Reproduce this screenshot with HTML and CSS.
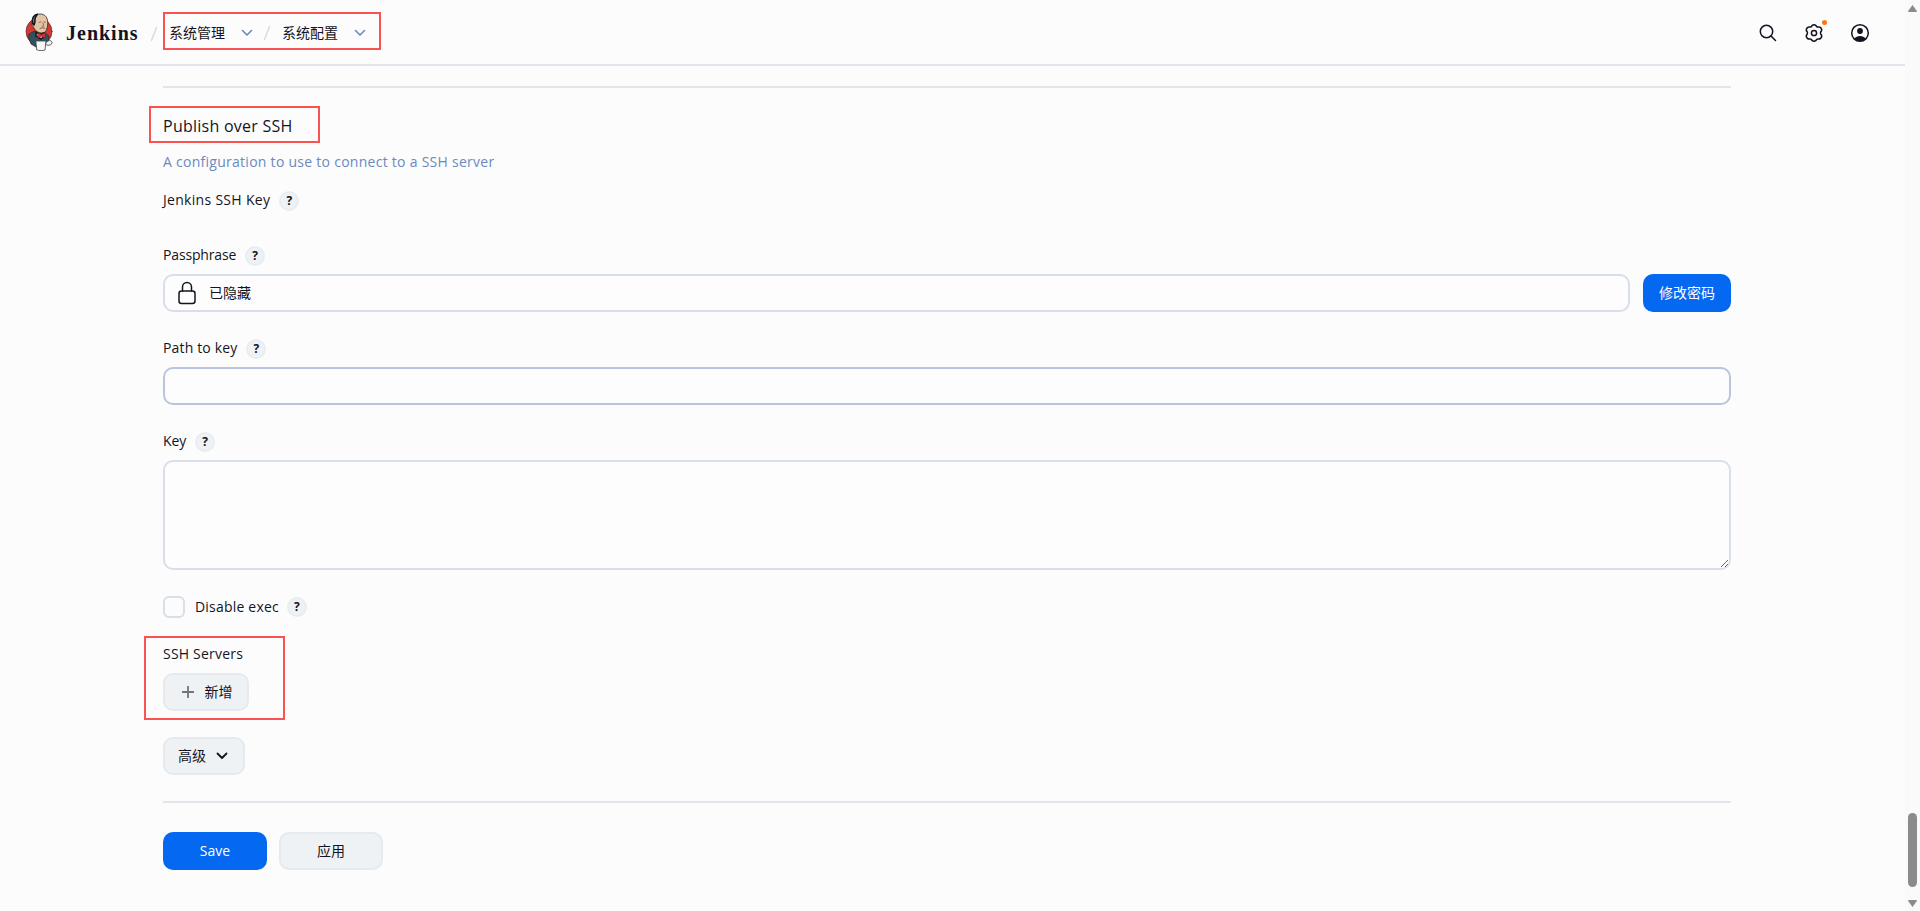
FILE: index.html
```html
<!DOCTYPE html>
<html lang="zh-CN">
<head>
    <meta charset="UTF-8">
    <meta name="viewport" content="width=device-width, initial-scale=1.0">
    <title>系统配置 - Jenkins</title>
    <link rel="stylesheet" href="styles.css">
</head>
<body>
    <div class="page">
        <header class="header">
            <a class="logo" href="#">
                <svg width="28" height="38" viewBox="0 0 28 38">
                    <ellipse cx="14" cy="18.500" rx="13" ry="13.500" fill="#d33833" stroke="#5b2a2a" stroke-width=".7"/>
                    <path d="M4 21l6-3 9 1 5 4-1 7-4 3-8 1-5-3-2-5z" fill="#335061" stroke="#1d2b36" stroke-width=".7"/>
                    <path d="M7.500 10C7 4 10.500 1 15 1c5.500 0 8 4 7.700 9.500-.2 6-2 9.500-5.700 9.500-4.500 0-7.500-3-8.500-6-1.600-.4-2-3-1-4z" fill="#e3c4a4" stroke="#2c2522" stroke-width=".8"/>
                    <path d="M7.500 10C6.500 5 9 1.800 12.500 1.300 10 4 9.600 6.500 10 9l-1 3z" fill="#7c7770"/>
                    <path d="M14 9.300l2-.4m3 .1l1.600.2M18 10l.8 3-1.500.3" fill="none" stroke="#6b5242" stroke-width=".7"/>
                    <path d="M15 15.500c2-1 3.600-1 5-.2" fill="none" stroke="#6b5242" stroke-width=".9"/>
                    <path d="M11 19l4 3 4-2 1 3-4 3-5-3z" fill="#dcd9d8"/>
                    <path d="M13 20l3.500 1.700 3.800-2v5l-3.800-1.500-3.500 2z" fill="#d33833" stroke="#8f1d1d" stroke-width=".6"/>
                    <path d="M11 28h10l-1 9c-2 .8-6 .8-8 0z" fill="#f7f7f7" stroke="#444" stroke-width=".8"/>
                    <path d="M21 30c2-3.500 6-3 6-.5s-3 3.500-5.500 2.500" fill="#eee" stroke="#444" stroke-width=".8"/>
                </svg>
                <span class="logo-text">Jenkins</span>
            </a>
            <nav class="breadcrumbs">
                <svg class="slash" width="8" height="16" viewBox="0 0 8 16"><path d="M6.500 1.500l-5 13"/></svg>
                <div class="crumb-list">
                    <span class="crumb">系统管理</span>
                    <svg class="chevron" width="12" height="8" viewBox="0 0 12 8"><path d="M1.500 1.500L6 6l4.500-4.500"/></svg>
                    <svg class="slash" width="8" height="16" viewBox="0 0 8 16"><path d="M6.500 1.500l-5 13"/></svg>
                    <span class="crumb">系统配置</span>
                    <svg class="chevron" width="12" height="8" viewBox="0 0 12 8"><path d="M1.500 1.500L6 6l4.500-4.500"/></svg>
                </div>
            </nav>
            <div class="actions">
                <svg width="20" height="20" viewBox="0 0 20 20"><circle cx="8.500" cy="8.500" r="6.200"/><path d="M13 13l4.500 4.500"/></svg>
                <div class="manage">
                    <svg width="20" height="20" viewBox="0 0 20 20">
                        <circle cx="10" cy="10" r="2.600"/>
                        <path d="M8 2.600Q10 .8 12 2.600Q12.700 4.300 14.400 4Q17 3.800 17.700 6.500Q17.900 7.700 16.900 8.600Q16.200 10 16.900 11.400Q17.900 12.300 17.700 13.500Q17 16.200 14.400 16Q12.700 15.700 12 17.400Q10 19.200 8 17.400Q7.300 15.700 5.600 16Q3 16.200 2.300 13.500Q2.100 12.300 3.100 11.400Q3.800 10 3.100 8.600Q2.100 7.700 2.300 6.500Q3 3.800 5.600 4Q7.300 4.300 8 2.600z"/>
                    </svg>
                    <span class="dot"></span>
                </div>
                <svg width="20" height="20" viewBox="0 0 20 20">
                    <circle cx="10" cy="10" r="8.300"/>
                    <circle class="solid" cx="10" cy="8" r="2.900"/>
                    <path class="solid" d="M4.200 15.800c1.400-2 3.500-2.800 5.800-2.800s4.400.8 5.800 2.800C14.300 17.500 12.300 18.300 10 18.300s-4.300-.8-5.800-2.500z"/>
                </svg>
            </div>
        </header>

        <main>
            <hr>
            <div class="section-title"><h2>Publish over SSH</h2></div>
            <p class="description">A configuration to use to connect to a SSH server</p>

            <div class="label first"><span class="wide">Jenkins SSH Key</span><button class="help">?</button></div>

            <div class="label passphrase"><span class="tight">Passphrase</span><button class="help">?</button></div>
            <div class="secret">
                <div class="input hidden-value">
                    <svg width="20" height="24" viewBox="0 0 20 24"><path d="M5.500 10V6a4.500 4.500 0 0 1 9 0v4"/><rect x="2" y="10" width="16" height="12.500" rx="2.500"/></svg>
                    <span>已隐藏</span>
                </div>
                <button class="btn primary change">修改密码</button>
            </div>

            <div class="label"><span>Path to key</span><button class="help">?</button></div>
            <input class="input hover" type="text">

            <div class="label"><span class="tight">Key</span><button class="help">?</button></div>
            <textarea class="input area"></textarea>

            <div class="check">
                <span class="box"></span>
                <span class="check-text">Disable exec</span>
                <button class="help">?</button>
            </div>

            <div class="servers">
                <div class="servers-title">SSH Servers</div>
                <button class="btn add">
                    <svg width="12" height="12" viewBox="0 0 12 12"><path d="M6 .5v11M.5 6h11"/></svg>
                    新增
                </button>
            </div>
            <button class="btn advanced">
                高级
                <svg width="12" height="8" viewBox="0 0 12 8"><path d="M1.500 1.500L6 6l4.500-4.500"/></svg>
            </button>
            <hr class="bottom">
            <div class="footer">
                <button class="btn primary">Save</button>
                <button class="btn">应用</button>
            </div>
        </main>
    </div>

    <div class="scrollbar">
        <svg width="9" height="7" viewBox="0 0 9 7"><path d="M4.500 0L9 6.200 8.500 7h-8L0 6.200z"/></svg>
        <span class="thumb"></span>
        <svg width="9" height="7" viewBox="0 0 9 7"><path d="M4.500 7L9 .8 8.500 0h-8L0 .8z"/></svg>
    </div>
</body>
</html>
```
FILE: styles.css
```css
* {
    box-sizing: border-box;
}

body {
    margin: 0;
    height: 911px;
    display: flex;
    overflow: hidden;
    background: #fcfcfc;
    color: #14141f;
    font: 14px/20px "Open Sans", "Noto Sans CJK SC", sans-serif;
}

button,
input,
textarea {
    font: inherit;
    color: inherit;
    margin: 0;
}

svg {
    display: block;
    flex: none;
    fill: none;
    stroke: #14141f;
    stroke-width: 1.5;
    stroke-linecap: round;
    stroke-linejoin: round;
}

.page {
    width: 1905px;
}

/* header */
.header {
    height: 66px;
    padding: 0 35px 0 25px;
    border-bottom: 2px solid #e1e6ec;
    display: flex;
    align-items: center;
}

.logo {
    display: flex;
    align-items: center;
    gap: 13px;
    width: 125px;
    color: inherit;
    text-decoration: none;
}

.logo-text {
    padding-top: 1px;
    font: bold 20px/24px "Liberation Serif", serif;
    letter-spacing: 1px;
}

.breadcrumbs {
    display: flex;
    align-items: center;
}

.slash {
    margin-top: 3px;
    stroke: #d5dbea;
}

.chevron {
    margin-top: 3px;
    stroke: #6688b8;
}

.crumb {
    padding-top: 3px;
}

.crumb-list {
    height: 38px;
    width: 218px;
    margin: -2px 0 0 5px;
    padding-left: 4px;
    border: 2px solid #fb5151;
    display: flex;
    align-items: center;
}

.crumb-list .chevron {
    margin-left: 16px;
}

.crumb-list .slash {
    margin: 3px 11px 0 10px;
}

.actions {
    margin-left: auto;
    padding-top: 2px;
    display: flex;
    gap: 26px;
}

.manage {
    position: relative;
}

.dot {
    position: absolute;
    top: -3px;
    right: -3px;
    width: 5px;
    height: 5px;
    border-radius: 50%;
    background: #fe7613;
}

.solid {
    fill: #14141f;
    stroke: none;
}

/* form */
main {
    width: 1568px;
    margin-left: 163px;
    padding-top: 20px;
}

hr {
    height: 2px;
    margin: 0;
    border: 0;
    background: #e1e6ec;
}

.section-title {
    width: 171px;
    height: 37px;
    margin: 18px 0 0 -14px;
    padding: 2px 0 0 12px;
    border: 2px solid #fb5151;
    display: flex;
    align-items: center;
}

h2 {
    margin: 0;
    font-size: 16px;
    font-weight: 400;
    letter-spacing: 0.25px;
    white-space: nowrap;
}

.description {
    margin: 9px 0 0;
    height: 22px;
    color: #6b8abb;
    letter-spacing: 0.27px;
}

.label {
    height: 20px;
    margin: 27px 0 8px;
    display: flex;
    gap: 9px;
}

.label span {
    margin-top: -1px;
    letter-spacing: 0.15px;
}

.label .wide {
    letter-spacing: 0.3px;
}

.label .tight {
    letter-spacing: -0.15px;
}

.first {
    margin: 17px 0 0;
}

.passphrase {
    margin-top: 35px;
}

.help {
    width: 20px;
    height: 20px;
    padding: 0 0 1px;
    border: 2px solid #e9edf1;
    border-radius: 50%;
    background: #eef2f5;
    font-size: 12px;
    font-weight: 700;
    line-height: 15px;
}

.secret {
    display: flex;
    gap: 13px;
}

.input {
    display: block;
    width: 100%;
    height: 38px;
    border: 2px solid #d9deeb;
    border-radius: 10px;
    background: #fdfdfd;
}

.hidden-value {
    display: flex;
    align-items: center;
    gap: 12px;
    padding-left: 12px;
}

.hover {
    border-color: #b8c5dc;
}

.area {
    height: 110px;
    resize: vertical;
}

.check {
    height: 22px;
    margin-top: 26px;
    display: flex;
    align-items: center;
}

.box {
    width: 22px;
    height: 22px;
    margin-right: 10px;
    border: 2px solid #d9deeb;
    border-radius: 6px;
}

.check-text {
    letter-spacing: 0.2px;
}

.check .help {
    margin-left: 8px;
}

.servers {
    width: 141px;
    height: 84px;
    margin: 18px 0 0 -19px;
    padding: 6px 0 0 17px;
    border: 2px solid #fb5151;
}

.servers-title {
    margin-bottom: 9px;
    letter-spacing: 0.2px;
}

.btn {
    height: 38px;
    padding: 0;
    border: 2px solid #e5eaee;
    border-radius: 10px;
    background: #eef2f5;
    display: flex;
    align-items: center;
    justify-content: center;
}

.primary {
    border-color: #0468f1;
    background: #0468f1;
    color: #fff;
}

.change {
    flex: none;
    width: 88px;
}

.add {
    width: 86px;
    padding-left: 2px;
    gap: 11px;
}

.add svg {
    stroke: #73737e;
    stroke-width: 1.8;
}

.advanced {
    width: 82px;
    margin-top: 17px;
    padding-right: 2px;
    gap: 10px;
}

.advanced svg {
    stroke-width: 1.8;
}

.bottom {
    margin-top: 26px;
}

.footer {
    margin-top: 29px;
    display: flex;
    gap: 12px;
}

.footer .btn {
    width: 104px;
}

/* scrollbar */
.scrollbar {
    width: 15px;
    padding: 5px 3px 4px;
    background: #fafafa;
    display: flex;
    flex-direction: column;
}

.scrollbar svg {
    fill: #8b8b8b;
    stroke: none;
}

.thumb {
    height: 74px;
    margin: auto 0 13px;
    border-radius: 5px;
    background: #8b8b8b;
}
```
